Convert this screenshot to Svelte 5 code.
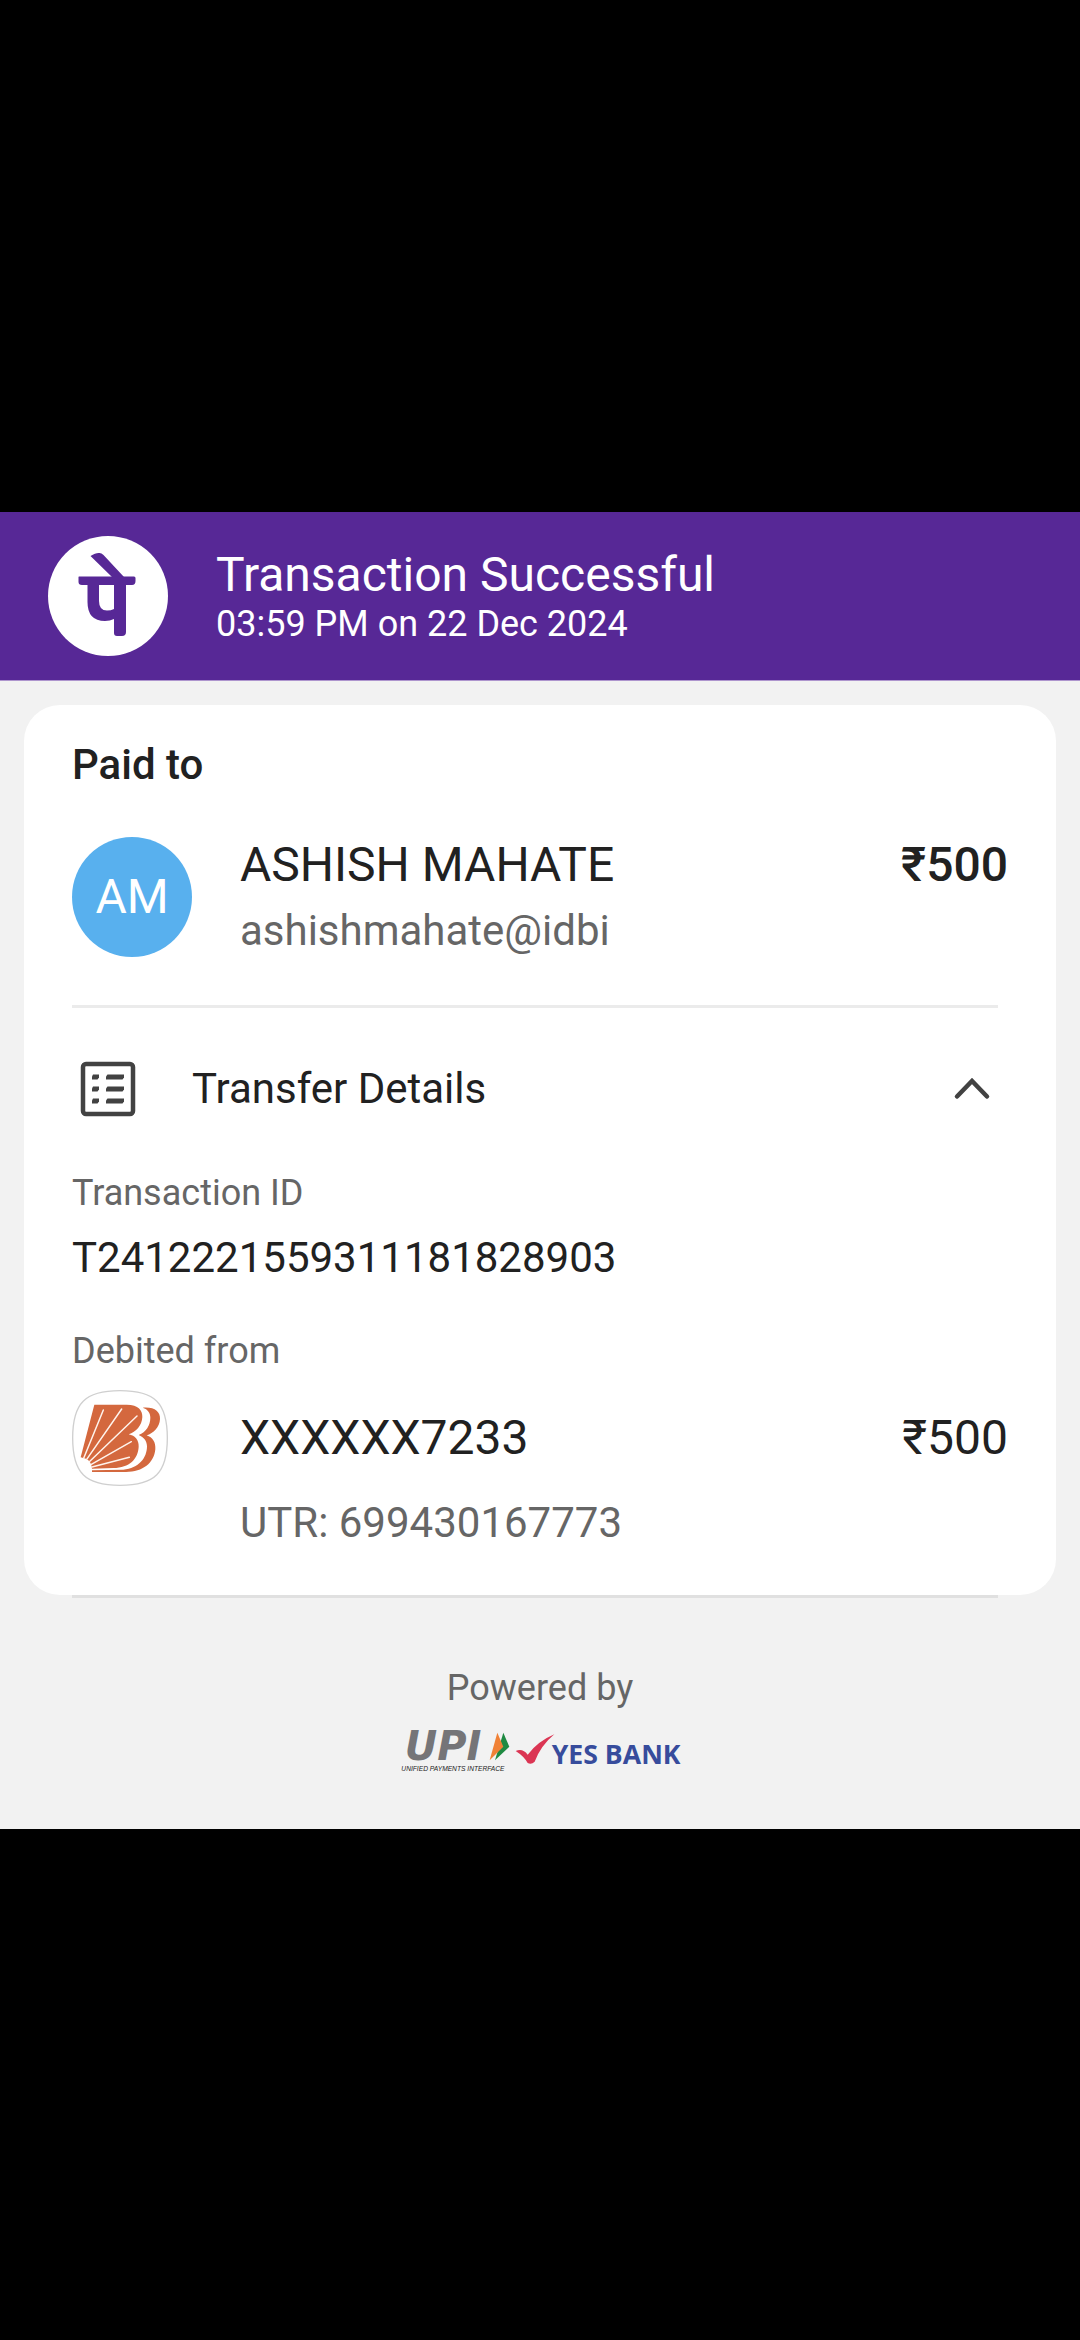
<script lang="ts">
    let isExpanded = $state(true);

    const header = {
        title: 'Transaction Successful',
        time: '03:59 PM on 22 Dec 2024'
    };

    const payee = {
        initials: 'AM',
        name: 'ASHISH MAHATE',
        vpa: 'ashishmahate@idbi',
        amount: '₹500'
    };

    const transfer = {
        id: 'T2412221559311181828903',
        account: 'XXXXXX7233',
        amount: '₹500',
        utr: 'UTR: 699430167773'
    };

    function toggle() {
        isExpanded = !isExpanded;
    }
</script>

<main class="screen">
    <div class="receipt">
        <header class="header">
            <svg class="brand" viewBox="0 0 120 120" role="img" aria-label="PhonePe">
                <circle cx="60" cy="60" r="60" fill="#fff" />
                <g fill="#572896">
                    <path d="M42.5 20 Q48 16.5 51.5 17 Q53.5 17 55.5 19 L76 41 H64 Z" />
                    <path d="M31 40.5 H86 Q87.500 40.5 87.500 42 V45 Q87.500 49 84 49 H78 V96 Q78 100 74 100 H69 Q66 100 66 97 V83 Q62 85 57 85 Q39.500 85 39.500 66 V49 H34 Q30.500 49 30.500 46 V41 Q30.500 40.500 31 40.500 Z M51 49 V65 Q51 74.500 59 74.500 Q63 74.500 66 73 V49 Z" fill-rule="evenodd" />
                </g>
            </svg>
            <div>
                <h1 class="title">{header.title}</h1>
                <p class="time">{header.time}</p>
            </div>
        </header>

        <section class="card">
            <h2 class="label-strong">Paid to</h2>
            <div class="party">
                <div class="avatar">{payee.initials}</div>
                <div>
                    <p class="large">{payee.name}</p>
                    <p class="muted vpa">{payee.vpa}</p>
                </div>
                <p class="large amount-strong">{payee.amount}</p>
            </div>

            <hr class="divider" />

            <button class="toggle" onclick={toggle} aria-expanded={isExpanded} aria-controls="details">
                <svg class="icon" viewBox="0 0 72 72" aria-hidden="true">
                    <rect x="11" y="11" width="50" height="50" rx="3" fill="none" stroke="#424242" stroke-width="4.500" />
                    <g fill="#424242">
                        {#each [21.5, 33.5, 45.5] as y}
                            <path d="M21 {y} h6 v3 l-1.500 2 h-5.500 v-3 Z" />
                            <path d="M35.500 {y} h16.500 v3 l-1.500 2 h-16.500 v-3 Z" />
                        {/each}
                    </g>
                </svg>
                <span class="toggle-text">Transfer Details</span>
                <svg class="icon chevron" class:collapsed={!isExpanded} viewBox="0 0 72 72" aria-hidden="true">
                    <path d="M21 43.500 L36 28 L51 43.500" fill="none" stroke="#424242" stroke-width="4.500" stroke-linecap="round" />
                </svg>
            </button>

            {#if isExpanded}
                <div id="details">
                    <h3 class="label">Transaction ID</h3>
                    <p class="value">{transfer.id}</p>

                    <h3 class="label debited">Debited from</h3>
                    <div class="account">
                        <svg class="bank" viewBox="36 27 288 288" role="img" aria-label="Bank of Baroda">
                            <path d="M180 29 C285 29 322 66 322 171 C322 276 285 313 180 313 C75 313 38 276 38 171 C38 66 75 29 180 29 Z" fill="#fff" stroke="#cfcfcf" stroke-width="4" />
                            <path d="M248 80 C284 77 301 92 300 114 C299 139 280 157 260 163 C278 169 288 184 286 205 C282 246 249 273 198 273 L96 273 L96 268 L190 266 C236 262 261 231 261 196 C261 180 252 169 236 162 C258 153 271 133 271 110 C271 96 264 85 248 80 Z" fill="#d4683e" />
                            <path d="M103 71 H200 C236 71 248 89 247 108 C246 133 228 153 206 160 C226 164 237 178 236 197 C234 234 209 260 160 261 L96 263 L94 252 L89 241 L78 233 L62 229 Z" fill="#d4683e" />
                            <g fill="none" stroke="#fff3ec" stroke-width="4.500" stroke-linecap="round">
                                <path d="M71 232 L130 87" />
                                <path d="M80 235 L185 84" />
                                <path d="M88 242 L231 105" />
                                <path d="M94 250 L214 182" />
                                <path d="M96 258 L208 229" />
                            </g>
                        </svg>
                        <p class="large">{transfer.account}</p>
                        <p class="large">{transfer.amount}</p>
                        <p class="muted utr">{transfer.utr}</p>
                    </div>
                </div>
            {/if}
        </section>
        <hr class="divider end" />

        <footer class="footer">
            <p class="label">Powered by</p>
            <svg class="partners" viewBox="60 270 840 126" role="img" aria-label="UPI and YES BANK">
                <text class="upi" x="74" y="358">UPI</text>
                <path d="M370 275 L388 317 L345 358 Z" fill="#1f8a42" />
                <path d="M352 275 L370 317 L329 358 Z" fill="#f08136" />
                <text class="upi-caption" x="64" y="389">UNIFIED PAYMENTS INTERFACE</text>
                <path d="M407 330 Q428 321 443 341 Q475 300 523 280 Q483 313 464 362 Q454 372 443 366 Q432 346 407 330 Z" fill="#db3553" />
                <text class="yes" x="515" y="368">YES BANK</text>
            </svg>
        </footer>
    </div>
</main>

<style>
    :global(body) {
        background: #000;
    }

    .screen {
        min-height: 100vh;
        display: flex;
        flex-direction: column;
        justify-content: center;
        font-family: Roboto, 'Noto Sans', sans-serif;
        color: #212121;
    }

    .receipt {
        background: #f2f2f2;
    }

    h1,
    h2,
    h3,
    p {
        margin: 0;
        font-weight: 400;
    }

    .header {
        display: flex;
        align-items: center;
        gap: 48px;
        min-height: 168px;
        padding: 0 48px;
        background: #572896;
        border-bottom: 1px solid #ae95ce;
        color: #fff;
    }

    .brand {
        width: 120px;
        height: 120px;
        flex: none;
    }

    .title {
        font-size: 48px;
        line-height: 56px;
    }

    .time {
        font-size: 36px;
        line-height: 42px;
    }

    .card {
        margin: 24px 24px 0;
        padding: 36px 48px 48px;
        background: #fff;
        border-radius: 36px;
    }

    .label-strong {
        font-size: 42px;
        line-height: 48px;
        font-weight: 500;
    }

    .party,
    .account {
        display: grid;
        grid-template-columns: 168px 1fr auto;
    }

    .party {
        margin-top: 48px;
    }

    .avatar {
        width: 120px;
        height: 120px;
        border-radius: 50%;
        background: #58b0ee;
        color: #fff;
        font-size: 48px;
        line-height: 120px;
        text-align: center;
    }

    .large {
        font-size: 48px;
        line-height: 56px;
    }

    .amount-strong {
        font-weight: 500;
    }

    .muted {
        font-size: 42px;
        line-height: 48px;
        color: #666;
    }

    .vpa {
        margin-top: 14px;
    }

    .divider {
        height: 3px;
        margin: 48px 10px 0 0;
        border: 0;
        background: #ebebeb;
    }

    .divider.end {
        margin: 0 82px 0 72px;
        background: #e0e0e0;
    }

    .toggle {
        display: flex;
        align-items: center;
        width: 100%;
        margin-top: 45px;
        padding: 0;
        border: 0;
        background: none;
        font: inherit;
        color: inherit;
        text-align: left;
        cursor: pointer;
    }

    .toggle-text {
        flex: 1;
        margin-left: 48px;
        font-size: 42px;
        line-height: 48px;
    }

    .icon {
        width: 72px;
        height: 72px;
        flex: none;
    }

    .chevron.collapsed {
        transform: rotate(180deg);
    }

    .label {
        font-size: 36px;
        line-height: 42px;
        color: #666;
    }

    #details {
        margin-top: 47px;
    }

    .value {
        margin-top: 20px;
        font-size: 42px;
        line-height: 48px;
    }

    .debited {
        margin-top: 48px;
    }

    .account {
        margin-top: 18px;
        row-gap: 13px;
        align-items: center;
    }

    .bank {
        width: 96px;
        height: 96px;
    }

    .utr {
        grid-column: 2 / -1;
    }

    .footer {
        display: flex;
        flex-direction: column;
        align-items: center;
        gap: 22px;
        padding: 69px 24px 56px;
    }

    .partners {
        width: 280px;
        height: 42px;
        overflow: visible;
    }

    .upi {
        font: italic 700 120px 'DejaVu Sans', sans-serif;
        fill: #757578;
    }

    .upi-caption {
        font: italic 400 20px 'Liberation Sans', sans-serif;
        fill: #222;
    }

    .yes {
        font: 700 80px 'Open Sans', sans-serif;
        fill: #374c9c;
    }
</style>
